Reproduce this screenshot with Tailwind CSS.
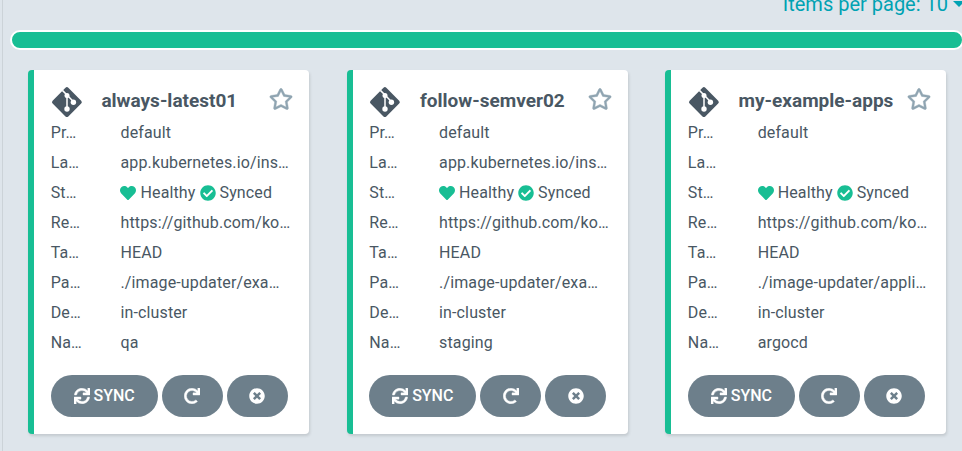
<!DOCTYPE html>
<html lang="en">
<head>
<meta charset="utf-8">
<title>Applications</title>
<script src="https://cdn.jsdelivr.net/npm/@tailwindcss/browser@4"></script>
</head>
<body class="bg-[#dee5eb] font-['Roboto',sans-serif] text-[16px] text-[#495763] w-[962px] h-[451px] overflow-hidden">
<svg class="hidden">
  <symbol id="heart" viewBox="0 0 512 512"><path d="M462.3 62.6C407.5 15.9 326 24.3 275.7 76.2L256 96.5l-19.7-20.3C186.1 24.3 104.5 15.9 49.7 62.6c-62.8 53.6-66.1 149.8-9.9 207.9l193.5 199.8c12.5 12.9 32.8 12.9 45.3 0l193.5-199.8c56.3-58.1 53-154.3-9.8-207.9z"/></symbol>
  <symbol id="check" viewBox="0 0 512 512"><path d="M504 256c0 136.967-111.033 248-248 248S8 392.967 8 256 119.033 8 256 8s248 111.033 248 248zM227.314 387.314l184-184c6.248-6.248 6.248-16.379 0-22.627l-22.627-22.627c-6.248-6.249-16.379-6.249-22.628 0L216 308.118l-70.059-70.059c-6.248-6.248-16.379-6.248-22.628 0l-22.627 22.627c-6.248 6.248-6.248 16.379 0 22.627l104 104c6.249 6.249 16.379 6.249 22.628.001z"/></symbol>
  <symbol id="times" viewBox="0 0 512 512"><path d="M256 8C119 8 8 119 8 256s111 248 248 248 248-111 248-248S393 8 256 8zm121.6 313.1c4.7 4.7 4.7 12.3 0 17L338 377.6c-4.7 4.7-12.3 4.7-17 0L256 312l-65.1 65.6c-4.7 4.7-12.3 4.7-17 0L134.4 338c-4.7-4.7-4.7-12.3 0-17l65.6-65-65.6-65.1c-4.7-4.7-4.7-12.3 0-17l39.6-39.6c4.7-4.7 12.3-4.7 17 0l65 65.7 65.1-65.6c4.7-4.7 12.3-4.7 17 0l39.6 39.6c4.7 4.7 4.7 12.3 0 17L312 256l65.6 65.1z"/></symbol>
  <symbol id="star" viewBox="0 0 576 512"><path d="M528.1 171.5L382 150.2 316.7 17.8c-11.7-23.6-45.6-23.9-57.4 0L194 150.2 47.9 171.5c-26.2 3.8-36.7 36.1-17.7 54.6l105.7 103-25 145.5c-4.5 26.3 23.2 46 46.4 33.7L288 439.6l130.7 68.7c23.2 12.2 50.9-7.4 46.4-33.7l-25-145.5 105.7-103c19-18.5 8.5-50.8-17.7-54.6zM388.6 312.3l23.7 138.4L288 385.4l-124.3 65.3 23.7-138.4-100.6-98 139-20.2 62.2-126 62.2 126 139 20.2-100.6 98z"/></symbol>
  <symbol id="redo" viewBox="0 0 512 512"><path d="M500.33 0h-47.41a12 12 0 0 0-12 12.57l4 82.76A247.42 247.42 0 0 0 256 8C119.34 8 7.9 119.53 8 256.19 8.1 393.07 119.1 504 256 504a247.1 247.1 0 0 0 166.18-63.91 12 12 0 0 0 .48-17.43l-34-34a12 12 0 0 0-16.38-.55A176 176 0 1 1 402.1 157.8l-101.53-4.87a12 12 0 0 0-12.57 12v47.41a12 12 0 0 0 12 12h200.33a12 12 0 0 0 12-12V12a12 12 0 0 0-12-12z"/></symbol>
  <symbol id="sync" viewBox="0 0 512 512"><path d="M440.65 12.57l4 82.77A247.16 247.16 0 0 0 255.83 8C134.73 8 33.91 94.92 12.29 209.82A12 12 0 0 0 24.09 224h49.05a12 12 0 0 0 11.67-9.26 175.91 175.91 0 0 1 317-56.94l-101.46-4.86a12 12 0 0 0-12.57 12v47.41a12 12 0 0 0 12 12H500a12 12 0 0 0 12-12V12a12 12 0 0 0-12-12h-47.37a12 12 0 0 0-11.98 12.57zM255.83 432a175.61 175.61 0 0 1-146-77.8l101.8 4.87a12 12 0 0 0 12.57-12v-47.4a12 12 0 0 0-12-12H12a12 12 0 0 0-12 12V500a12 12 0 0 0 12 12h47.35a12 12 0 0 0 12-12.6l-4.15-82.57A247.17 247.17 0 0 0 255.83 504c121.11 0 221.93-86.92 243.55-201.82a12 12 0 0 0-11.8-14.18h-49.05a12 12 0 0 0-11.67 9.26A175.86 175.86 0 0 1 255.83 432z"/></symbol>
  <symbol id="git" viewBox="0 0 32 32">
    <rect x="4.8" y="5" width="22.2" height="22.2" rx="2" transform="rotate(45 15.9 16.1)" fill="#495763"/>
    <path d="M11.4 4.4L16 9v14M16 9l6.3 6.6" fill="none" stroke="#fff" stroke-width="1.5"/>
    <circle cx="16" cy="9.4" r="2.5" fill="#fff"/><circle cx="16" cy="23" r="2.7" fill="#fff"/><circle cx="22.4" cy="16.2" r="2.7" fill="#fff"/>
  </symbol>
</svg>
<div class="flex h-full">
  <div class="w-[3px] shrink-0 border-r border-[#ccd3d8]"></div>
  <main class="w-[959px] shrink-0 pl-[7px]">
    <div class="h-[30px] flex justify-end overflow-hidden text-[#00a2b3] text-[20px] leading-[24px]">
      <div class="flex h-6 -mt-[8px] whitespace-nowrap">Items per page: 10<svg class="w-[12px] h-[6px] ml-[5px] mt-[9px] -mr-[3px]" viewBox="0 0 12 6" fill="currentColor"><path d="M0 0h12L6 6z"/></svg></div>
    </div>
    <div class="w-[954px] h-[20px] rounded-full bg-[#18be94] border-2 border-white"></div>
    <div id="cards" class="flex gap-[37.4px] pl-[18px] pt-5"></div>
  </main>
</div>
<template id="card">
  <article class="w-[281.2px] h-[364px] shrink-0 bg-white rounded-[4px] border-l-[6px] border-[#18be94] shadow-[1px_2px_3px_rgba(0,0,0,0.12)] pl-[16.7px] pt-4">
    <header class="flex h-[32px]">
      <svg class="w-8 h-8 shrink-0"><use href="#git"/></svg>
      <h2 class="w-[168px] ml-[18.7px] text-[19px] font-bold leading-[30px] whitespace-nowrap"></h2>
      <svg class="w-6 h-[22px] mt-[2px] fill-[#8fa4b1] stroke-[#8fa4b1] stroke-[10px] shrink-0"><use href="#star"/></svg>
    </header>
    <dl class="leading-[30px] h-[257px] tracking-[0.13px]"></dl>
    <footer class="flex gap-1 text-white">
      <button class="w-[107px] h-[42px] rounded-[21px] bg-[#6d7f8b] flex items-center justify-center gap-1 font-medium"><svg class="w-4 h-4 fill-current stroke-current stroke-[14px] overflow-visible"><use href="#sync"/></svg><span>SYNC</span></button>
      <button class="w-[61px] h-[42px] rounded-[21px] bg-[#6d7f8b] flex items-center justify-center"><svg class="w-4 h-4 fill-current stroke-current stroke-[14px]"><use href="#redo"/></svg></button>
      <button class="w-[61px] h-[42px] rounded-[21px] bg-[#6d7f8b] flex items-center justify-center"><svg class="w-4 h-4 fill-current"><use href="#times"/></svg></button>
    </footer>
  </article>
</template>
<script>
const status = '<span class="flex items-center gap-1"><svg class="w-4 h-4 fill-[#18be94]"><use href="#heart"/></svg>Healthy<svg class="w-4 h-4 fill-[#18be94]"><use href="#check"/></svg>Synced</span>';
const labels = ['Pr…', 'La…', 'St…', 'Re…', 'Ta…', 'Pa…', 'De…', 'Na…'];
const apps = [
  ['always-latest01', 'app.kubernetes.io/ins…', './image-updater/exa…', 'qa'],
  ['follow-semver02', 'app.kubernetes.io/ins…', './image-updater/exa…', 'staging'],
  ['my-example-apps', '', './image-updater/appli…', 'argocd']
];
for (const [name, label, path, ns] of apps) {
  const node = document.getElementById('card').content.cloneNode(true);
  node.querySelector('h2').textContent = name;
  const values = ['default', label, status, 'https://github.com/ko…', 'HEAD', path, 'in-cluster', ns];
  node.querySelector('dl').innerHTML = labels.map((l, i) =>
    `<div class="flex h-[30px] whitespace-nowrap"><dt class="w-[69.8px] shrink-0">${l}</dt><dd>${values[i]}</dd></div>`).join('');
  document.getElementById('cards').append(node);
}
</script>
</body>
</html>
